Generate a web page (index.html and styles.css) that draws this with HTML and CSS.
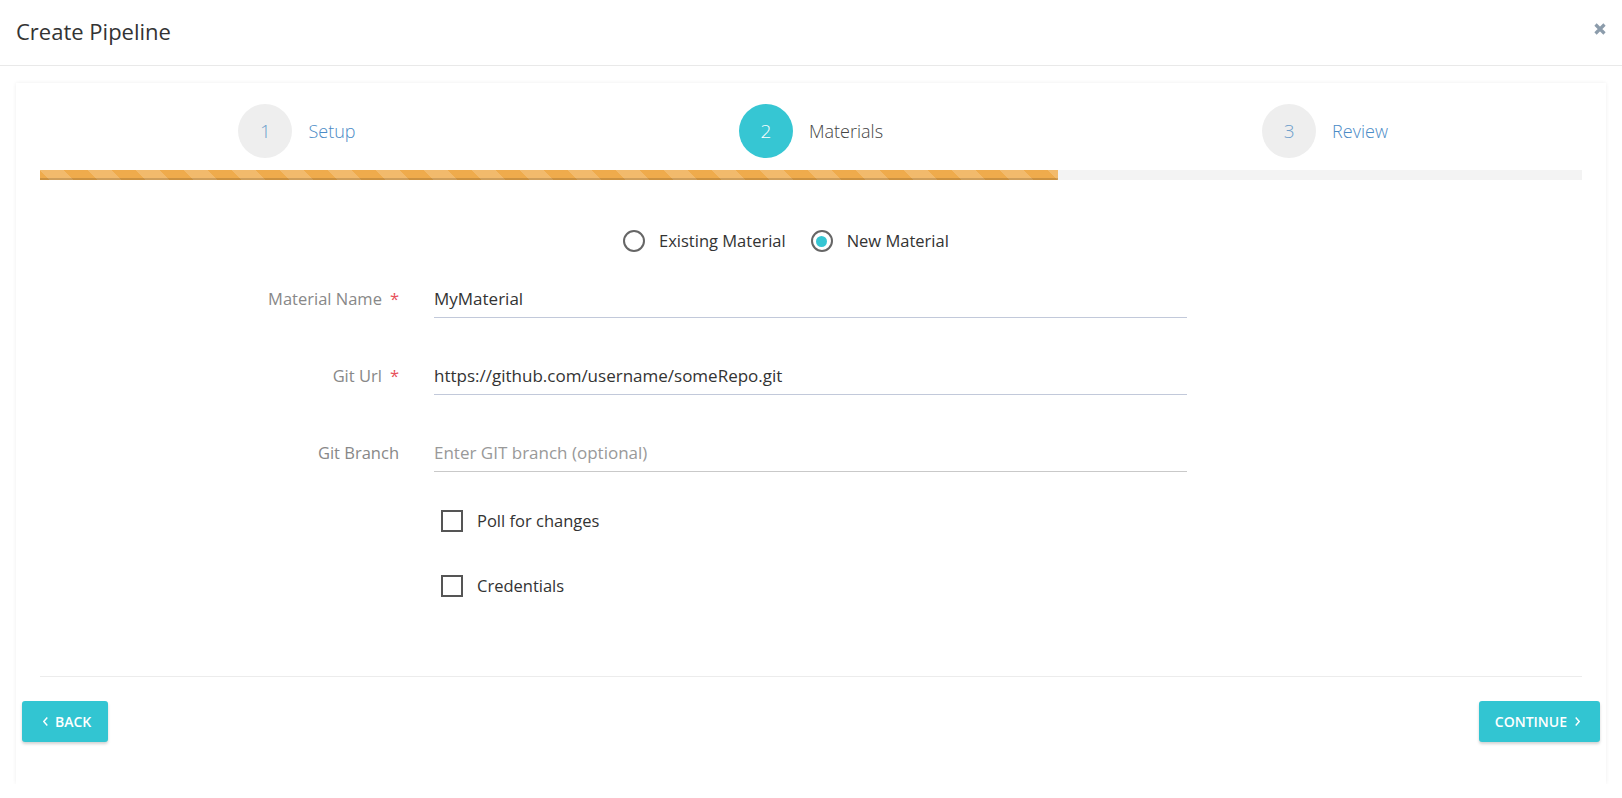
FILE: index.html
```html
<!DOCTYPE html>
<html lang="en">
<head>
<meta charset="utf-8">
<title>Create Pipeline</title>
<link rel="stylesheet" href="styles.css">
</head>
<body>
<header class="modal-header">
  <h1 class="modal-title">Create Pipeline</h1>
  <button class="close" aria-label="Close">
    <svg width="12" height="12" viewBox="0 0 12 12"><path d="M1.5 1.5 L10.5 10.5 M10.5 1.5 L1.5 10.5" stroke="#8c9cab" stroke-width="3.2" stroke-linecap="butt"/></svg>
  </button>
</header>

<main class="card">
  <div class="card-body">
    <div class="steps">
      <div class="step done">
        <span class="step-num">1</span>
        <span class="step-label">Setup</span>
      </div>
      <div class="step active">
        <span class="step-num">2</span>
        <span class="step-label">Materials</span>
      </div>
      <div class="step">
        <span class="step-num">3</span>
        <span class="step-label">Review</span>
      </div>
    </div>

    <div class="progress">
      <div class="progress-bar" style="width: 66.05%"></div>
    </div>

    <div class="radio-row">
      <label class="radio"><span class="radio-box"></span><span>Existing Material</span></label>
      <label class="radio checked"><span class="radio-box"></span><span>New Material</span></label>
    </div>

    <div class="form-row">
      <div class="form-label">Material Name<span class="req">*</span></div>
      <div class="form-input valid">MyMaterial</div>
    </div>
    <div class="form-row">
      <div class="form-label">Git Url<span class="req">*</span></div>
      <div class="form-input valid">https://github.com/username/someRepo.git</div>
    </div>
    <div class="form-row">
      <div class="form-label">Git Branch</div>
      <div class="form-input placeholder">Enter GIT branch (optional)</div>
    </div>

    <div class="check-row first">
      <label class="checkbox"><span class="check-box"></span><span>Poll for changes</span></label>
    </div>
    <div class="check-row">
      <label class="checkbox"><span class="check-box"></span><span>Credentials</span></label>
    </div>

    <div class="divider"></div>
  </div>

  <div class="card-footer">
    <button class="btn btn-back">
      <svg width="5" height="9" viewBox="0 0 5 9"><polyline points="4.3,0.5 0.8,4.5 4.3,8.5" fill="none" stroke="#fff" stroke-width="1.4"/></svg>
      <span>BACK</span>
    </button>
    <button class="btn btn-continue">
      <span>CONTINUE</span>
      <svg width="5" height="9" viewBox="0 0 5 9"><polyline points="0.7,0.5 4.2,4.5 0.7,8.5" fill="none" stroke="#fff" stroke-width="1.4"/></svg>
    </button>
  </div>
</main>
</body>
</html>
```

FILE: styles.css
```css
* {
  box-sizing: border-box;
}

html, body {
  margin: 0;
  padding: 0;
  background: #fff;
}

body {
  font-family: "Open Sans", "Liberation Sans", sans-serif;
  color: #333;
  font-size: 17px;
}

.modal-header {
  height: 66px;
  border-bottom: 1px solid #e9e9e9;
  display: flex;
  align-items: center;
  justify-content: space-between;
  padding: 0 16px 0 16px;
}

.modal-title {
  margin: 0;
  font-size: 22px;
  font-weight: 400;
  color: #333;
  line-height: 30px;
  margin-top: -3px;
}

.close {
  border: 0;
  background: none;
  padding: 0;
  width: 12px;
  height: 12px;
  display: block;
  align-self: flex-start;
  margin-top: 23px;
}

.close svg {
  display: block;
}

.card {
  margin: 17px 16px 0 16px;
  height: 701px;
  background: #fff;
  box-shadow: 0 0 4px rgba(0, 0, 0, 0.07);
  display: flex;
  flex-direction: column;
}

.card-body {
  padding: 21px 24px 0 24px;
}

.steps {
  display: grid;
  grid-template-columns: repeat(3, 1fr);
  height: 54px;
}

.step {
  display: flex;
  align-items: center;
  justify-content: center;
  gap: 16px;
}

.step-num {
  width: 54px;
  height: 54px;
  border-radius: 50%;
  background: #eeeeee;
  display: flex;
  align-items: center;
  justify-content: center;
  font-size: 19px;
  font-weight: 300;
  color: #6f9fcc;
}

.step-label {
  font-size: 18px;
  font-weight: 300;
  color: #4b8bc6;
}

.step.active .step-num {
  background: #36c6d3;
  color: #fff;
}

.step.active .step-label {
  color: #444;
}

.progress {
  margin-top: 12px;
  height: 10px;
  background: #f3f3f3;
}

.progress-bar {
  height: 10px;
  background-color: #efab4c;
  background-image: linear-gradient(45deg,
    rgba(255, 255, 255, 0.18) 25%, transparent 25%,
    transparent 50%, rgba(255, 255, 255, 0.18) 50%,
    rgba(255, 255, 255, 0.18) 75%, transparent 75%, transparent);
  background-size: 48px 48px;
  box-shadow: inset 0 -2px 0 rgba(0, 0, 0, 0.15);
}

.radio-row {
  margin-top: 50px;
  height: 22px;
  display: flex;
  align-items: center;
  padding-left: 583px;
  gap: 25px;
  font-size: 16.5px;
}

.radio {
  display: flex;
  align-items: center;
  gap: 14px;
  color: #333;
  line-height: 22px;
}

.radio-box {
  width: 22px;
  height: 22px;
  border: 2px solid #666;
  border-radius: 50%;
  display: flex;
  align-items: center;
  justify-content: center;
}

.radio.checked .radio-box::after {
  content: "";
  width: 11px;
  height: 11px;
  border-radius: 50%;
  background: #36c6d3;
}

.form-row {
  display: grid;
  grid-template-columns: 359px 753px;
  column-gap: 35px;
  margin-top: 39px;
}

.radio-row + .form-row {
  margin-top: 28px;
}

.form-label {
  text-align: right;
  color: #888;
  line-height: 37px;
  height: 38px;
  font-size: 16.5px;
}

.req {
  color: #e7505a;
  margin-left: 8px;
}

.form-input {
  line-height: 37px;
  height: 38px;
  border-bottom: 1px solid #c2c9da;
  color: #333;
}

.form-input.placeholder {
  color: #999;
  border-bottom-color: #c9c9c9;
}

.check-row {
  margin-top: 43px;
  padding-left: 401px;
  height: 22px;
  font-size: 16.5px;
}

.check-row.first {
  margin-top: 38px;
}

.checkbox {
  display: flex;
  align-items: center;
  gap: 14px;
  line-height: 22px;
  color: #333;
}

.check-box {
  width: 22px;
  height: 22px;
  border: 2px solid #555;
}

.divider {
  margin-top: 79px;
  height: 1px;
  background: #ececec;
}

.card-footer {
  display: flex;
  justify-content: space-between;
  padding: 24px 6px 0 6px;
}

.btn {
  height: 41px;
  border: 0;
  border-radius: 3px;
  background: #32c5d2;
  color: #fff;
  font-family: "Open Sans", "Liberation Sans", sans-serif;
  font-size: 14px;
  font-weight: 600;
  display: flex;
  align-items: center;
  box-shadow: 0 2px 3px rgba(0, 0, 0, 0.18);
}

.btn svg {
  display: block;
}

.btn-back {
  padding: 0 17px 0 21px;
  gap: 7px;
}

.btn-continue {
  padding: 0 20px 0 16px;
  gap: 8px;
}
```
